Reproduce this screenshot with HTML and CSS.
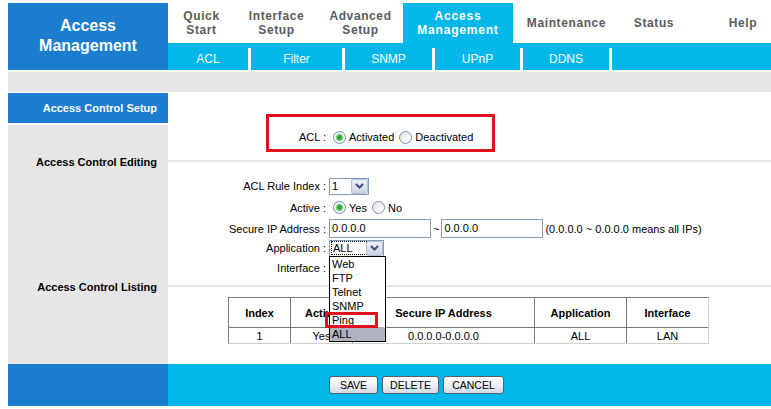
FILE: index.html
```html
<!DOCTYPE html>
<html>
<head>
<meta charset="utf-8">
<title>Access Management</title>
<link rel="stylesheet" href="styles.css">
</head>
<body>
<div class="page">
  <header class="top">
    <div class="logo">Access<br>Management</div>
    <div class="navwrap">
      <nav class="mainnav">
        <div class="tab w1">Quick<br>Start</div>
        <div class="tab w2">Interface<br>Setup</div>
        <div class="tab w3">Advanced<br>Setup</div>
        <div class="tab w4 active">Access<br>Management</div>
        <div class="tab w5">Maintenance</div>
        <div class="tab w6">Status</div>
        <div class="tab w7">Help</div>
      </nav>
      <nav class="subnav">
        <div class="sub s1">ACL</div><div class="sep"></div>
        <div class="sub s2">Filter</div><div class="sep"></div>
        <div class="sub s3">SNMP</div><div class="sep"></div>
        <div class="sub s4">UPnP</div><div class="sep"></div>
        <div class="sub s5">DDNS</div><div class="sep"></div>
      </nav>
    </div>
  </header>
  <div class="greybar"></div>
  <div class="main">
    <aside class="side">
      <div class="side-head">Access Control Setup</div>
      <div class="side-body">
        <div class="side-label">Access Control Editing</div>
        <div class="side-label">Access Control Listing</div>
      </div>
    </aside>
    <section class="content">
      <div class="sec-acl">
        <div class="form-row">
          <div class="lbl">ACL :</div>
          <div class="val">
            <label class="opt"><input class="radio" type="radio" name="acl" checked>Activated</label>
            <label class="opt"><input class="radio" type="radio" name="acl">Deactivated</label>
          </div>
        </div>
        <div class="mark mark-acl"></div>
      </div>
      <div class="divider"></div>
      <div class="sec-edit">
        <div class="form-row">
          <div class="lbl">ACL Rule Index :</div>
          <div class="val">
            <div class="sel sel-idx"><span class="sel-val">1</span><span class="sel-btn"><svg width="9" height="6" viewBox="0 0 9 6"><path d="M1 1 L4.5 4.5 L8 1" stroke="#3e5078" stroke-width="2" fill="none"/></svg></span></div>
          </div>
        </div>
        <div class="form-row r-active">
          <div class="lbl">Active :</div>
          <div class="val">
            <label class="opt"><input class="radio" type="radio" name="act" checked>Yes</label>
            <label class="opt"><input class="radio" type="radio" name="act">No</label>
          </div>
        </div>
        <div class="form-row r-ip">
          <div class="lbl">Secure IP Address :</div>
          <div class="val">
            <span class="txt">0.0.0.0</span><span class="tilde">~</span><span class="txt">0.0.0.0</span><span class="hint">(0.0.0.0 ~ 0.0.0.0 means all IPs)</span>
          </div>
        </div>
        <div class="form-row">
          <div class="lbl">Application :</div>
          <div class="val">
            <div class="sel sel-app"><span class="sel-val"><span class="focus">ALL</span></span><span class="sel-btn"><svg width="9" height="6" viewBox="0 0 9 6"><path d="M1 1 L4.5 4.5 L8 1" stroke="#3e5078" stroke-width="2" fill="none"/></svg></span>
              <div class="dropdown">
                <div class="item">Web</div>
                <div class="item">FTP</div>
                <div class="item">Telnet</div>
                <div class="item">SNMP</div>
                <div class="item">Ping</div>
                <div class="item hl">ALL</div>
                <div class="mark mark-ping"></div>
              </div>
            </div>
          </div>
        </div>
        <div class="form-row">
          <div class="lbl">Interface :</div>
          <div class="val">
            <div class="sel sel-app"><span class="sel-val"></span><span class="sel-btn"></span></div>
          </div>
        </div>
      </div>
      <div class="divider"></div>
      <div class="sec-list">
        <table class="list">
          <colgroup><col class="c1"><col class="c2"><col class="c3"><col class="c4"><col class="c5"></colgroup>
          <tr><th>Index</th><th>Active</th><th>Secure IP Address</th><th>Application</th><th>Interface</th></tr>
          <tr><td>1</td><td>Yes</td><td>0.0.0.0-0.0.0.0</td><td>ALL</td><td>LAN</td></tr>
        </table>
      </div>
    </section>
  </div>
  <footer class="foot">
    <div class="foot-left"></div>
    <div class="foot-right">
      <button class="btn b-save">SAVE</button>
      <button class="btn b-del">DELETE</button>
      <button class="btn b-cancel">CANCEL</button>
    </div>
  </footer>
</div>
</body>
</html>
```

FILE: styles.css
```css
* { box-sizing: border-box; }
body {
  margin: 3px 0 0 8px;
  font-family: "Liberation Sans", Arial, sans-serif;
  font-size: 11px;
  color: #000;
  background: #fff;
}
.page { width: 763px; }

/* header */
.top { display: flex; height: 67px; }
.logo {
  width: 160px;
  background: #1a7dce;
  color: #fff;
  font-weight: bold;
  font-size: 16px;
  line-height: 20px;
  text-align: center;
  padding-top: 13px;
}
.navwrap { flex: 1; display: flex; flex-direction: column; }
.mainnav { display: flex; height: 40px; }
.tab {
  display: flex;
  align-items: center;
  justify-content: center;
  text-align: center;
  font-weight: bold;
  font-size: 12px;
  line-height: 14px;
  color: #5b5b5b;
  letter-spacing: 0.6px;
}
.tab.active { background: #00b7ea; color: #fff; letter-spacing: 0.8px; }
.w1 { width: 67px; }
.w2 { width: 83px; }
.w3 { width: 85px; }
.w4 { width: 110px; }
.w5 { width: 107px; }
.w6 { width: 68px; }
.w7 { flex: 1; padding-left: 27px; }
.subnav { display: flex; height: 27px; background: #00b7ea; padding-top: 5px; }
.sub {
  display: flex;
  align-items: center;
  justify-content: center;
  color: #fff;
  font-size: 12px;
}
.sep { width: 3px; background: #fff; }
.s1 { width: 80px; }
.s2 { width: 91px; }
.s3 { width: 87px; }
.s4 { width: 85px; }
.s5 { width: 86px; }

.greybar { height: 20px; margin: 2px 0 1px; background: #e6e6e6; }

/* main */
.main { display: grid; grid-template-columns: 160px 1fr; height: 271px; }
.side { display: flex; flex-direction: column; }
.side-head {
  height: 30px;
  line-height: 30px;
  background: #1a7dce;
  color: #fff;
  font-weight: bold;
  text-align: right;
  padding-right: 11px;
}
.side-body { flex: 1; margin-top: 2px; background: #e6e6e6; padding-top: 30px; }
.side-label { font-weight: bold; line-height: 14px; text-align: right; padding-right: 11px; }
.side-label + .side-label { margin-top: 111px; }

.content { display: flex; flex-direction: column; }
.sec-acl { height: 67px; padding-top: 34px; position: relative; }
.divider { height: 2px; background: #e6e6e6; flex: none; }
.sec-edit { height: 123px; padding-top: 14px; }
.sec-list { flex: 1; padding-top: 10px; }

.form-row { display: grid; grid-template-columns: 161px 1fr; align-items: center; height: 20px; }
.r-active { height: 23px; }
.r-ip { height: 19px; }
.lbl { text-align: right; padding-right: 3px; }
.val { display: flex; align-items: center; }

.opt { display: inline-flex; align-items: center; margin-right: 1px; }
.radio {
  -webkit-appearance: none;
  appearance: none;
  width: 13px;
  height: 13px;
  margin: 0 3px 0 4px;
  border: 1px solid #7d8ea6;
  border-radius: 50%;
  background: linear-gradient(135deg, #d9dbe0, #ffffff 70%);
}
.radio:checked {
  background: radial-gradient(circle, #249a24 0, #3fae3f 2px, #a6dba6 3.5px, #ffffff 4.5px, #eef0f2 6px);
}

.sel {
  position: relative;
  display: inline-flex;
  height: 17px;
  border: 1px solid #7f9db9;
  background: #fff;
}
.sel-idx { width: 40px; }
.sel-app { width: 55px; }
.sel-val { flex: 1; padding-left: 2px; line-height: 15px; }
.focus { outline: 1px dotted #000; padding: 0 13px 0 1px; }
.sel-btn {
  width: 17px;
  display: flex;
  align-items: center;
  justify-content: center;
  background: linear-gradient(#eef1f7, #cbd3e3);
  border: 1px solid #b4bfd4;
  border-radius: 2px;
}

.txt {
  width: 102px;
  height: 19px;
  border: 1px solid #7f9db9;
  padding-left: 2px;
  line-height: 17px;
}
.tilde { margin: 0 2px 0 2px; }
.hint { margin-left: 2px; }

.dropdown {
  position: absolute;
  top: 15px;
  left: -1px;
  width: 57px;
  height: 86px;
  border: 1px solid #000;
  background: #fff;
  z-index: 5;
}
.item { height: 14px; line-height: 14px; padding-left: 2px; font-size: 11px; }
.item.hl { background: #aeb3bf; }

.mark { position: absolute; border: 3px solid #e0101c; z-index: 6; }
.mark-acl { left: 98px; top: 21px; width: 229px; height: 38px; }
.mark-ping { left: -5px; top: 55px; width: 53px; height: 16px; }

/* table */
.list {
  width: 480px;
  margin: 0 auto 0 60px;
  table-layout: fixed;
  border-collapse: separate;
  border-spacing: 0;
  border: 1px solid;
  border-color: #7a7a7a #cfcfcf #cfcfcf #7a7a7a;
  font-size: 11px;
}
.c1 { width: 62px; }
.c2 { width: 62px; }
.c3 { width: 182px; }
.c4 { width: 92px; }
.c5 { width: 81px; }
.list th {
  height: 30px;
  font-weight: bold;
  padding: 0;
  border-right: 1px solid #7a7a7a;
  border-bottom: 1px solid #7a7a7a;
}
.list td {
  height: 15px;
  padding: 0;
  text-align: center;
  line-height: 14px;
  border-right: 1px solid #7a7a7a;
}
.list th:last-child, .list td:last-child { border-right: none; }

/* footer */
.foot { display: grid; grid-template-columns: 160px 1fr; height: 42px; }
.foot-left { background: #1a7dce; }
.foot-right {
  background: #00b7ea;
  display: flex;
  align-items: center;
  gap: 4px;
  padding-left: 161px;
}
.btn {
  height: 18px;
  padding: 0;
  font-family: "Liberation Sans", Arial, sans-serif;
  font-size: 10.5px;
  color: #000;
  border: 1px solid #55606e;
  border-radius: 3px;
  background: linear-gradient(#ffffff, #eceff4 55%, #d3d8e2);
}
.b-save { width: 49px; }
.b-del { width: 57px; }
.b-cancel { width: 61px; }
```
